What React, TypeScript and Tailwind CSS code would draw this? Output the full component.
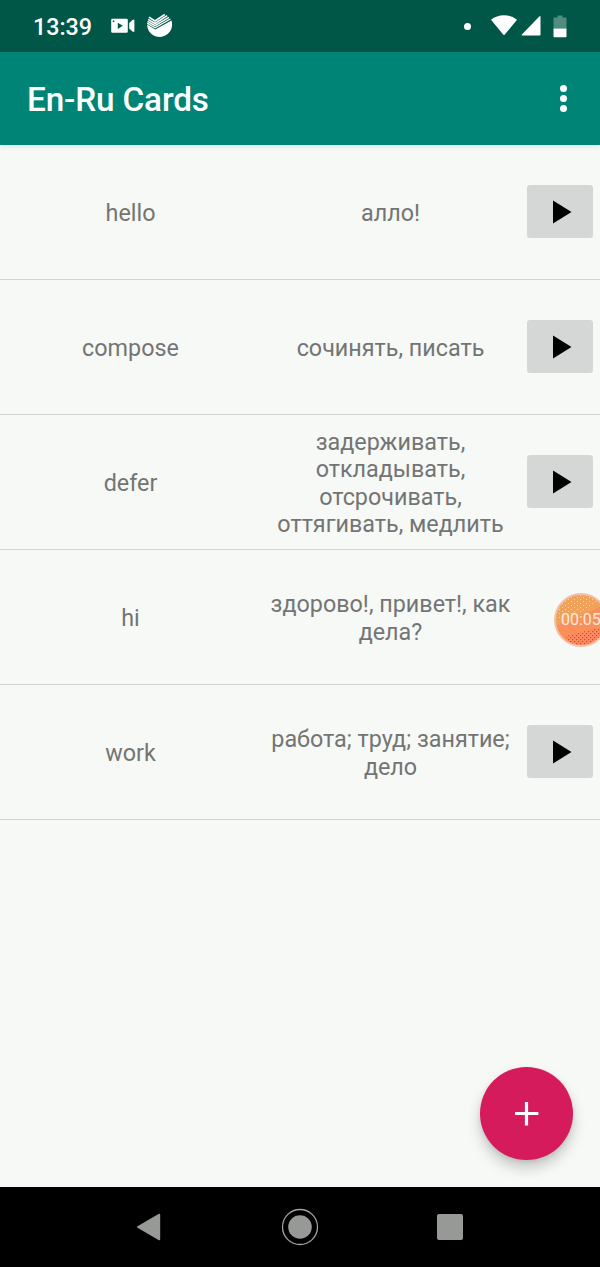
const cards = [
  { id: 1, en: "hello", ru: "алло!", playing: false },
  { id: 2, en: "compose", ru: "сочинять, писать", playing: false },
  { id: 3, en: "defer", ru: "задерживать, откладывать, отсрочивать, оттягивать, медлить", playing: false },
  { id: 4, en: "hi", ru: "здорово!, привет!, как дела?", playing: true },
  { id: 5, en: "work", ru: "работа; труд; занятие; дело", playing: false },
];

function StatusBar() {
  return (
    <div className="flex h-[52px] shrink-0 items-center bg-[#005747] pl-[33px] text-white">
      <span className="w-[78px] pt-[3px] text-[23.3px] font-medium leading-none">13:39</span>
      <svg className="h-[16px] w-[24px] shrink-0" viewBox="0 0 24 16" fill="#fff">
        <path
          fillRule="evenodd"
          d="M1.400 .7h14.200a1.200 1.200 0 0 1 1.200 1.200v11.600a1.200 1.200 0 0 1-1.200 1.200H1.400a1.200 1.200 0 0 1-1.200-1.200V1.900A1.200 1.200 0 0 1 1.400 .7zM1.800 2.400v1.600h1.600V2.400zM6.800 4.700v6.200l5-3.100z"
        />
        <path d="M18.200 4.900 21.800 1.700h1.600v12h-1.600l-3.600-3.200z" />
      </svg>
      <svg className="ml-[11px] h-[28px] w-[28px] shrink-0" viewBox="0 0 28 28">
        <path d="M1.100 12.400 9.200 17.400 25.500 8.600A12.500 12.500 0 1 1 1.100 12.400z" fill="#fff" />
        <path d="M2.900 5.200 9 9 18.800 2.500" fill="none" stroke="#fff" strokeWidth="1.500" />
        <path d="M2.100 7.400 9 11.500 21.200 3.700" fill="none" stroke="#fff" strokeWidth="1.500" />
        <path d="M1.600 9.300 9 13.700 22.900 5.300" fill="none" stroke="#fff" strokeWidth="1.500" />
        <path d="M1.200 11.100 9 15.800 24.400 7" fill="none" stroke="#fff" strokeWidth="1.400" />
      </svg>
      <div className="ml-auto flex items-center pr-[33.500px]">
        <span className="mr-[20px] size-[7px] rounded-full bg-white" />
        <svg className="h-[22px] w-[26px]" viewBox="0 0 26 22" fill="#fff">
          <path d="M0 4.700Q5.500 0.200 13 0.200T26 4.700L13.600 19.800Q13 20.500 12.400 19.800z" />
        </svg>
        <svg className="ml-[4px] h-[22px] w-[20px]" viewBox="0 0 20 22" fill="#fff">
          <path d="M19.500 1.600v18.200a.8.800 0 0 1-.8.800H1.300a.6.600 0 0 1-.4-1.100L18.300 1.500q1.200-.8 1.200.1z" />
        </svg>
        <svg className="ml-[12px] h-[23px] w-[14px]" viewBox="0 0 14 23">
          <path d="M4.500 .4h5v2h3.300q.7 0 .7.800v10.200H.5V3.200q0-.8.7-.8h3.300z" fill="#528b80" />
          <path d="M.5 13.400h13v8q0 .8-.8.8H1.300q-.8 0-.8-.8z" fill="#fff" />
        </svg>
      </div>
    </div>
  );
}

function AppBar() {
  return (
    <header className="z-10 flex h-[93px] shrink-0 items-center justify-between bg-[#008475] pl-[27px] pr-[33px] pt-[2px] shadow-[0_1px_5px_rgba(0,0,0,0.12)]">
      <h1 className="text-[33.3px] font-medium leading-none tracking-[-0.15px] text-white">En-Ru Cards</h1>
      <button aria-label="More options" className="mb-[2px] flex flex-col gap-[3px]">
        <span className="size-[7px] rounded-full bg-white" />
        <span className="size-[7px] rounded-full bg-white" />
        <span className="size-[7px] rounded-full bg-white" />
      </button>
    </header>
  );
}

function RecordingBubble() {
  return (
    <div className="absolute left-[34px] top-[43px] flex size-[54px] items-center overflow-hidden rounded-full border-2 border-[#f4c0a8] bg-[linear-gradient(157deg,#efa25a_0%,#efa25a_42%,#fb8f59_44%,#fb8f59_72%,#f9895c_100%)]">
      <svg className="absolute inset-0 h-full w-full" viewBox="0 0 50 50">
        <defs>
          <pattern id="dots-light" width="6" height="4" patternUnits="userSpaceOnUse">
            <rect width="1" height="1" fill="#f8cfa8" />
            <rect x="3" y="2" width="1" height="1" fill="#f8cfa8" />
          </pattern>
          <pattern id="dots-pink" width="4" height="4" patternUnits="userSpaceOnUse">
            <rect width="1.200" height="1.200" fill="#e62c70" />
            <rect x="2" y="2" width="1.200" height="1.200" fill="#e62c70" />
          </pattern>
        </defs>
        <path d="M0 0H48L34 14 2 24z" fill="url(#dots-light)" />
        <path d="M10 41 50 31V50H14z" fill="url(#dots-pink)" />
      </svg>
      <span className="relative ml-[5px] text-[16px] leading-none text-[#fdebe0]">00:05</span>
    </div>
  );
}

function PlayButton() {
  return (
    <button aria-label="Play" className="mb-[2px] flex h-[53px] w-[66px] items-center justify-center rounded-[3px] bg-[#d5d7d6]">
      <svg className="ml-[4px] mt-[1px] h-[24px] w-[19px]" viewBox="0 0 19 24">
        <path d="M0 .5 18.500 12 0 23.500z" fill="#000" />
      </svg>
    </button>
  );
}

function CardRow({ card }: { card: (typeof cards)[number] }) {
  return (
    <li className="grid h-[135px] grid-cols-[260px_260px_80px] items-center border-b border-[#d3d5d4] text-center text-[23.33px] leading-[27.3px] text-[#737574]">
      <span className="pl-[1px] pt-[3.500px]">{card.en}</span>
      <span className="pl-[8px] pr-[7px] pt-[3.500px]">{card.ru}</span>
      <div className="relative flex h-full items-center justify-center">
        {card.playing ? <RecordingBubble /> : <PlayButton />}
      </div>
    </li>
  );
}

function NavigationBar() {
  return (
    <nav className="grid h-[80px] shrink-0 grid-cols-[150px_150px_150px] justify-center bg-black">
      <button aria-label="Back" className="flex items-center justify-center pr-[4px]">
        <svg className="h-[28px] w-[25px]" viewBox="0 0 25 28">
          <path d="M1.500 13.200 22.500 .9q1.700-.8 1.700 1v24.200q0 1.800-1.700 1L1.500 14.800q-1.300-.8 0-1.600z" fill="#979996" />
        </svg>
      </button>
      <button aria-label="Home" className="flex items-center justify-center">
        <svg className="size-[38px]" viewBox="0 0 38 38">
          <circle cx="19" cy="19" r="17.500" fill="none" stroke="#a0a29f" strokeWidth="1.300" />
          <circle cx="19" cy="19" r="11.800" fill="#979996" />
        </svg>
      </button>
      <button aria-label="Recent apps" className="flex items-center justify-center">
        <span className="size-[26px] rounded-[2px] bg-[#979996]" />
      </button>
    </nav>
  );
}

export default function App() {
  return (
    <div className="flex h-[1267px] w-[600px] flex-col overflow-hidden bg-[#f7f9f7] font-['Roboto',sans-serif]">
      <StatusBar />
      <AppBar />
      <main className="relative flex-1 overflow-hidden">
        <ul>
          {cards.map((card) => (
            <CardRow key={card.id} card={card} />
          ))}
        </ul>
        <button
          aria-label="Add card"
          className="absolute bottom-[27px] right-[27px] flex size-[93px] items-center justify-center rounded-full bg-[#d51b5b] shadow-[0_8px_14px_rgba(0,0,0,0.2),0_2px_4px_rgba(0,0,0,0.08)]"
        >
          <svg className="size-[24px]" viewBox="0 0 24 24">
            <path d="M11.500 0v23.400M0 11.500h23.400" stroke="#fff" strokeWidth="3.200" />
          </svg>
        </button>
      </main>
      <NavigationBar />
    </div>
  );
}
